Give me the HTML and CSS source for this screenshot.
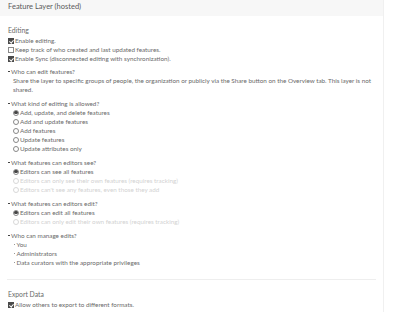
FILE: index.html
```html
<!DOCTYPE html>
<html lang="en">
  <head>
    <meta charset="UTF-8" />
    <title>Feature Layer (hosted)</title>
    <link rel="stylesheet" href="styles.css">
  </head>
  <body>
    <div class="panel">
      <div class="panelHead">Feature Layer (hosted)</div>
      <div class="panelBody">
        <section class="block">
          <h2 class="blockTitle">Editing</h2>
          <label class="row"><span class="check on"></span>Enable editing.</label>
          <label class="row"><span class="check"></span>Keep track of who created and last updated features.</label>
          <label class="row"><span class="check on"></span>Enable Sync (disconnected editing with synchronization).</label>
        </section>

        <div class="group first">
          <p class="question">Who can edit features?</p>
          <p class="note">
            Share the layer to specific groups of people, the organization or publicly via the Share button on the Overview tab. This layer is not shared.
          </p>
        </div>

        <div class="group">
          <p class="question">What kind of editing is allowed?</p>
          <label class="row sub"><span class="radio on"></span>Add, update, and delete features</label>
          <label class="row sub"><span class="radio"></span>Add and update features</label>
          <label class="row sub"><span class="radio"></span>Add features</label>
          <label class="row sub"><span class="radio"></span>Update features</label>
          <label class="row sub"><span class="radio"></span>Update attributes only</label>
        </div>

        <div class="group">
          <p class="question">What features can editors see?</p>
          <label class="row sub"><span class="radio on"></span>Editors can see all features</label>
          <label class="row sub off"><span class="radio"></span>Editors can only see their own features (requires tracking)</label>
          <label class="row sub off"><span class="radio"></span>Editors can't see any features, even those they add</label>
        </div>

        <div class="group">
          <p class="question">What features can editors edit?</p>
          <label class="row sub"><span class="radio on"></span>Editors can edit all features</label>
          <label class="row sub off"><span class="radio"></span>Editors can only edit their own features (requires tracking)</label>
        </div>

        <div class="group">
          <p class="question">Who can manage edits?</p>
          <ul class="people">
            <li>You</li>
            <li>Administrators</li>
            <li>Data curators with the appropriate privileges</li>
          </ul>
        </div>

        <hr class="divider" />

        <section class="block">
          <h2 class="blockTitle">Export Data</h2>
          <label class="row"><span class="check on"></span>Allow others to export to different formats.</label>
        </section>
      </div>
    </div>
  </body>
</html>
```

FILE: styles.css
```css
* {
  box-sizing: border-box;
  margin: 0;
  padding: 0;
}
body {
  width: 400px;
  height: 312px;
  overflow: hidden;
  background: #fff;
  font-family: Lato, "Open Sans", sans-serif;
  font-size: 6.3px;
  color: #6a6a6a;
}
.panel {
  width: 384px;
  height: 312px;
  border-right: 1px solid #f0f0f0;
}
.panelHead {
  height: 16px;
  line-height: 13px;
  padding-left: 8px;
  background: #f7f7f7;
  font-size: 7.5px;
  color: #5a5a5a;
}
.panelBody {
  padding: 9px 7px 0 8px;
}
.blockTitle {
  font-weight: normal;
  font-size: 6.8px;
  line-height: 11px;
}
.row {
  display: flex;
  align-items: center;
  height: 9px;
  line-height: 9px;
  white-space: nowrap;
}
.row.sub {
  padding-left: 5px;
}
.row.off {
  color: #d2d2d2;
}
.check {
  width: 6px;
  height: 6px;
  margin-right: 1px;
  border: 1px solid #888;
  background: #fff;
  position: relative;
  flex-shrink: 0;
}
.check.on {
  background: #4a4a4a;
  border-color: #4a4a4a;
}
.check.on::after {
  content: "";
  position: absolute;
  left: 1px;
  top: 0;
  width: 1.5px;
  height: 3px;
  border: solid #fff;
  border-width: 0 1px 1px 0;
  transform: rotate(40deg);
}
.radio {
  width: 6px;
  height: 6px;
  margin-right: 1px;
  border: 0.8px solid #888;
  border-radius: 50%;
  display: flex;
  align-items: center;
  justify-content: center;
  flex-shrink: 0;
}
.radio.on::after {
  content: "";
  width: 3.4px;
  height: 3.4px;
  border-radius: 50%;
  background: #444;
}
.off .radio {
  border-color: #d8d8d8;
}
.group {
  margin-top: 5px;
}
.group.first {
  margin-top: 4px;
}
.question {
  line-height: 9px;
  padding-left: 3px;
  position: relative;
}
.question::before {
  content: "";
  position: absolute;
  left: 0;
  top: 3.5px;
  width: 1.6px;
  height: 1.6px;
  background: #444;
}
.note {
  padding-left: 5px;
  line-height: 9px;
}
.people {
  list-style: none;
  padding-left: 5.5px;
}
.people li {
  line-height: 9px;
  padding-left: 3px;
  position: relative;
}
.people li::before {
  content: "";
  position: absolute;
  left: 0;
  top: 4px;
  width: 1.2px;
  height: 1.2px;
  border-radius: 50%;
  background: #777;
}
.divider {
  margin: 12px 0 9px -1px;
  border: 0;
  height: 1px;
  background: #eeeeee;
}
```
